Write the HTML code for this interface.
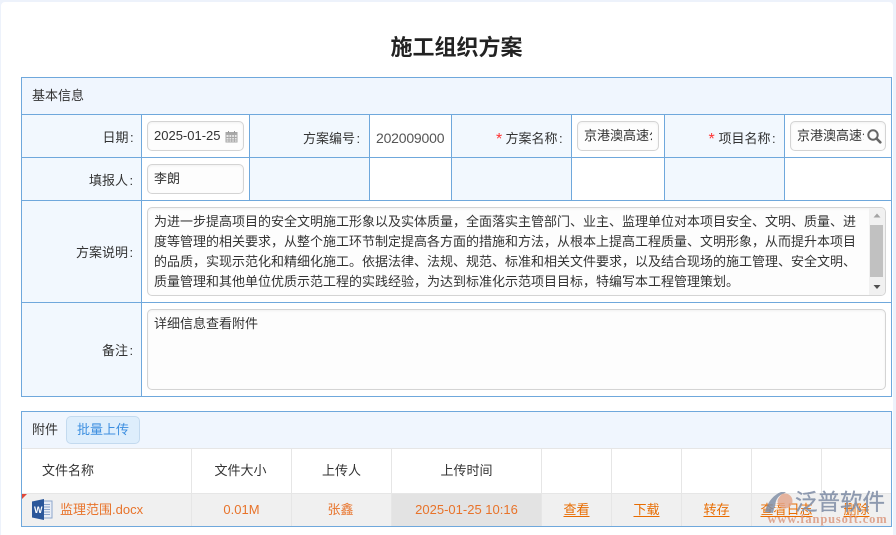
<!DOCTYPE html>
<html lang="zh-CN">
<head>
<meta charset="utf-8">
<title>施工组织方案</title>
<style>
html,body{margin:0;padding:0;width:896px;height:535px;overflow:hidden;background:#edf2fb}
body{font-family:"Liberation Sans","Noto Sans CJK SC",sans-serif;font-size:13px;color:#333;position:relative}
#p{position:absolute;left:1px;top:2px;width:892px;height:533px;background:#fff;border-radius:4px 4px 0 0}
.a{position:absolute;box-sizing:border-box;white-space:nowrap}
.t{line-height:18px;height:18px}
.c{text-align:center}
.bl{background:#6fa8dc}
.hd{background:#f0f6fe}
.lb{background:#f2f8fe}
.in{background:#fdfdfd;border:1px solid #d4d4d4;border-radius:5px;box-shadow:inset 0 1px 2px rgba(0,0,0,.05)}
.g{background:#e6e6e6}
.o{color:#e8732a}
.u{color:#e86c00;text-decoration:underline;text-underline-offset:2px}
.s{color:#f33;font-size:16px;line-height:18px}
i{font-style:normal;margin-left:1.500px}
</style>
</head>
<body>
<div id="p"></div>
<div class="a c" style="left:0;width:913px;top:32px;font-size:22px;font-weight:bold;line-height:32px;color:#222">施工组织方案</div>

<!-- main table backgrounds -->
<div class="a hd" style="left:22px;top:78px;width:869px;height:36px"></div>
<div class="a lb" style="left:22px;top:115px;width:119px;height:281px"></div>
<div class="a lb" style="left:250px;top:115px;width:119px;height:85px"></div>
<div class="a lb" style="left:452px;top:115px;width:119px;height:85px"></div>
<div class="a lb" style="left:665px;top:115px;width:119px;height:85px"></div>

<!-- main table lines -->
<div class="a bl" style="left:21px;top:77px;width:871px;height:1px"></div>
<div class="a bl" style="left:21px;top:114px;width:871px;height:1px"></div>
<div class="a bl" style="left:21px;top:157px;width:871px;height:1px"></div>
<div class="a bl" style="left:21px;top:200px;width:871px;height:1px"></div>
<div class="a bl" style="left:21px;top:302px;width:871px;height:1px"></div>
<div class="a bl" style="left:21px;top:396px;width:871px;height:1px"></div>
<div class="a bl" style="left:21px;top:77px;width:1px;height:320px"></div>
<div class="a bl" style="left:891px;top:77px;width:1px;height:320px"></div>
<div class="a bl" style="left:141px;top:114px;width:1px;height:283px"></div>
<div class="a bl" style="left:249px;top:114px;width:1px;height:86px"></div>
<div class="a bl" style="left:369px;top:114px;width:1px;height:86px"></div>
<div class="a bl" style="left:451px;top:114px;width:1px;height:86px"></div>
<div class="a bl" style="left:571px;top:114px;width:1px;height:86px"></div>
<div class="a bl" style="left:664px;top:114px;width:1px;height:86px"></div>
<div class="a bl" style="left:784px;top:114px;width:1px;height:86px"></div>

<div class="a t" style="left:32px;top:87px">基本信息</div>

<div class="a t" style="left:102.500px;top:129px">日期<i>:</i></div>
<div class="a in" style="left:147px;top:121px;width:97px;height:30px"></div>
<div class="a t" style="left:154px;top:127px">2025-01-25</div>
<svg class="a" style="left:225px;top:130px" width="13" height="13" viewBox="0 0 13 13"><rect x="0.500" y="2" width="12" height="10.500" fill="#a8a8a8"/><g fill="#e8e8e8"><rect x="1.500" y="5" width="2" height="2"/><rect x="4.500" y="5" width="1.700" height="2"/><rect x="7.200" y="5" width="1.700" height="2"/><rect x="9.900" y="5" width="1.700" height="2"/><rect x="1.500" y="8" width="2" height="1.500"/><rect x="4.500" y="8" width="1.700" height="1.500"/><rect x="7.200" y="8" width="1.700" height="1.500"/><rect x="9.900" y="8" width="1.700" height="1.500"/><rect x="1.500" y="10.400" width="2" height="1.200"/><rect x="4.500" y="10.400" width="1.700" height="1.200"/><rect x="7.200" y="10.400" width="1.700" height="1.200"/><rect x="9.900" y="10.400" width="1.700" height="1.200"/></g><rect x="3" y="1" width="1" height="2" fill="#999"/><rect x="9" y="1" width="1" height="2" fill="#999"/></svg>

<div class="a t" style="left:303px;top:130px">方案编号<i>:</i></div>
<div class="a t" style="left:376px;top:129px;color:#555;font-size:14px;letter-spacing:-.2px">202009000</div>

<div class="a t s" style="left:496px;top:131px">*</div>
<div class="a t" style="left:505.500px;top:130px">方案名称<i>:</i></div>
<div class="a in" style="left:577px;top:121px;width:82px;height:30px"></div>
<div class="a t" style="left:584px;top:127px;width:68px;overflow:hidden">京港澳高速公路</div>

<div class="a t s" style="left:708.500px;top:131px">*</div>
<div class="a t" style="left:718.500px;top:130px">项目名称<i>:</i></div>
<div class="a in" style="left:790px;top:121px;width:96px;height:30px"></div>
<div class="a t" style="left:797px;top:127px;width:67px;overflow:hidden">京港澳高速公路</div>
<svg class="a" style="left:866px;top:128px" width="16" height="16" viewBox="0 0 16 16"><circle cx="7" cy="7" r="4.700" fill="none" stroke="#666" stroke-width="2"/><path d="M10.500 10.500L14.300 14.300" stroke="#666" stroke-width="2.600" stroke-linecap="round"/></svg>

<div class="a t" style="left:89px;top:172px">填报人<i>:</i></div>
<div class="a in" style="left:147px;top:164px;width:97px;height:30px"></div>
<div class="a t" style="left:154px;top:170px">李朗</div>

<div class="a t" style="left:76px;top:244px">方案说明<i>:</i></div>
<div class="a in" style="left:147px;top:207px;width:739px;height:89px"></div>
<div class="a" style="left:154px;top:212px;width:716px;line-height:20px;white-space:normal">
<div style="white-space:nowrap">为进一步提高项目的安全文明施工形象以及实体质量，全面落实主管部门、业主、监理单位对本项目安全、文明、质量、进</div>
<div style="white-space:nowrap">度等管理的相关要求，从整个施工环节制定提高各方面的措施和方法，从根本上提高工程质量、文明形象，从而提升本项目</div>
<div style="white-space:nowrap">的品质，实现示范化和精细化施工。依据法律、法规、规范、标准和相关文件要求，以及结合现场的施工管理、安全文明、</div>
<div style="white-space:nowrap">质量管理和其他单位优质示范工程的实践经验，为达到标准化示范项目目标，特编写本工程管理策划。</div>
</div>
<div class="a" style="left:869px;top:208px;width:16px;height:87px;background:#f1f1f1;border-radius:0 4px 4px 0"></div>
<div class="a" style="left:870px;top:225px;width:13px;height:52px;background:#c1c1c1"></div>
<svg class="a" style="left:869px;top:208px" width="16" height="87" viewBox="0 0 16 87"><path d="M4.500 9.500L8 5.500L11.500 9.500Z" fill="#a3a3a3"/><path d="M4.500 77L8 81L11.500 77Z" fill="#505050"/></svg>

<div class="a t" style="left:102px;top:342px">备注<i>:</i></div>
<div class="a in" style="left:147px;top:309px;width:739px;height:81px"></div>
<div class="a t" style="left:154px;top:315px">详细信息查看附件</div>

<!-- attachment table -->
<div class="a hd" style="left:22px;top:412px;width:869px;height:36px"></div>
<div class="a" style="left:22px;top:494px;width:869px;height:32px;background:#f0f0f0"></div>
<div class="a" style="left:392px;top:494px;width:149px;height:32px;background:#e3e3e3"></div>

<div class="a g" style="left:22px;top:448px;width:869px;height:1px"></div>
<div class="a g" style="left:22px;top:493px;width:869px;height:1px"></div>
<div class="a g" style="left:191px;top:449px;width:1px;height:77px"></div>
<div class="a g" style="left:291px;top:449px;width:1px;height:77px"></div>
<div class="a g" style="left:391px;top:449px;width:1px;height:77px"></div>
<div class="a g" style="left:541px;top:449px;width:1px;height:77px"></div>
<div class="a g" style="left:611px;top:449px;width:1px;height:77px"></div>
<div class="a g" style="left:681px;top:449px;width:1px;height:77px"></div>
<div class="a g" style="left:751px;top:449px;width:1px;height:77px"></div>
<div class="a g" style="left:821px;top:449px;width:1px;height:77px"></div>

<div class="a bl" style="left:21px;top:411px;width:871px;height:1px"></div>
<div class="a bl" style="left:21px;top:526px;width:871px;height:1px"></div>
<div class="a bl" style="left:21px;top:411px;width:1px;height:116px"></div>
<div class="a bl" style="left:891px;top:411px;width:1px;height:116px"></div>

<div class="a t" style="left:32px;top:421px">附件</div>
<div class="a c" style="left:66px;top:416px;width:74px;height:28px;line-height:25px;background:#deeefc;border:1px solid #c3daef;border-radius:5px;color:#3d8fe0">批量上传</div>

<div class="a t" style="left:42px;top:462px">文件名称</div>
<div class="a t c" style="left:191px;width:99px;top:462px">文件大小</div>
<div class="a t c" style="left:292px;width:99px;top:462px">上传人</div>
<div class="a t c" style="left:392px;width:149px;top:462px">上传时间</div>

<svg class="a" style="left:22px;top:494px" width="6" height="6"><path d="M0 0H5L0 5Z" fill="#e0483a"/></svg>
<svg class="a" style="left:32px;top:499px" width="21" height="21" viewBox="0 0 21 21"><rect x="8" y="2" width="12" height="17" fill="#e9eef6" stroke="#8da6cc" stroke-width="1"/><path d="M11 5.500h7M11 8h7M11 10.500h7M11 13h7M11 15.500h7" stroke="#8da6cc" stroke-width="1"/><path d="M0 2.500L12 0V21L0 18.500Z" fill="#2b579a"/><text x="2" y="14" font-size="9" font-weight="bold" fill="#fff" font-family="Liberation Sans">W</text></svg>

<div class="a t o" style="left:60px;top:501px">监理范围.docx</div>
<div class="a t c o" style="left:192px;width:99px;top:501px">0.01M</div>
<div class="a t c o" style="left:291px;width:99px;top:501px">张鑫</div>
<div class="a t c o" style="left:392px;width:149px;top:501px">2025-01-25 10:16</div>
<div class="a t c u" style="left:542px;width:69px;top:501px">查看</div>
<div class="a t c u" style="left:612px;width:69px;top:501px">下载</div>
<div class="a t c u" style="left:682px;width:69px;top:501px">转存</div>
<div class="a t c u" style="left:752px;width:69px;top:501px">查看日志</div>
<div class="a t c u" style="left:822px;width:69px;top:501px">删除</div>

<!-- watermark -->
<svg class="a" style="left:762px;top:489px;opacity:.8" width="36" height="28" viewBox="0 0 36 28"><path d="M3 23C5 14 11 6 19 3H24C17 8 13 14 11 24Z" fill="#7d8ba3"/><circle cx="23" cy="12" r="7.500" fill="#e3a58a"/><path d="M20 5.500C15 9 14 15 17 20L14 22C12 15 14 8 20 5.500Z" fill="#fff" opacity=".85"/></svg>
<div class="a" style="left:795px;top:487.500px;font-size:22.500px;line-height:30px;color:#8390a8;opacity:.9;-webkit-text-stroke:.3px #8390a8">泛普软件</div>
<div class="a" style="left:767.500px;top:512px;font-family:'Liberation Serif',serif;font-size:12.500px;font-weight:bold;line-height:14px;color:#dd9d85;letter-spacing:.85px;opacity:.9">www.fanpusoft.com</div>
</body>
</html>
